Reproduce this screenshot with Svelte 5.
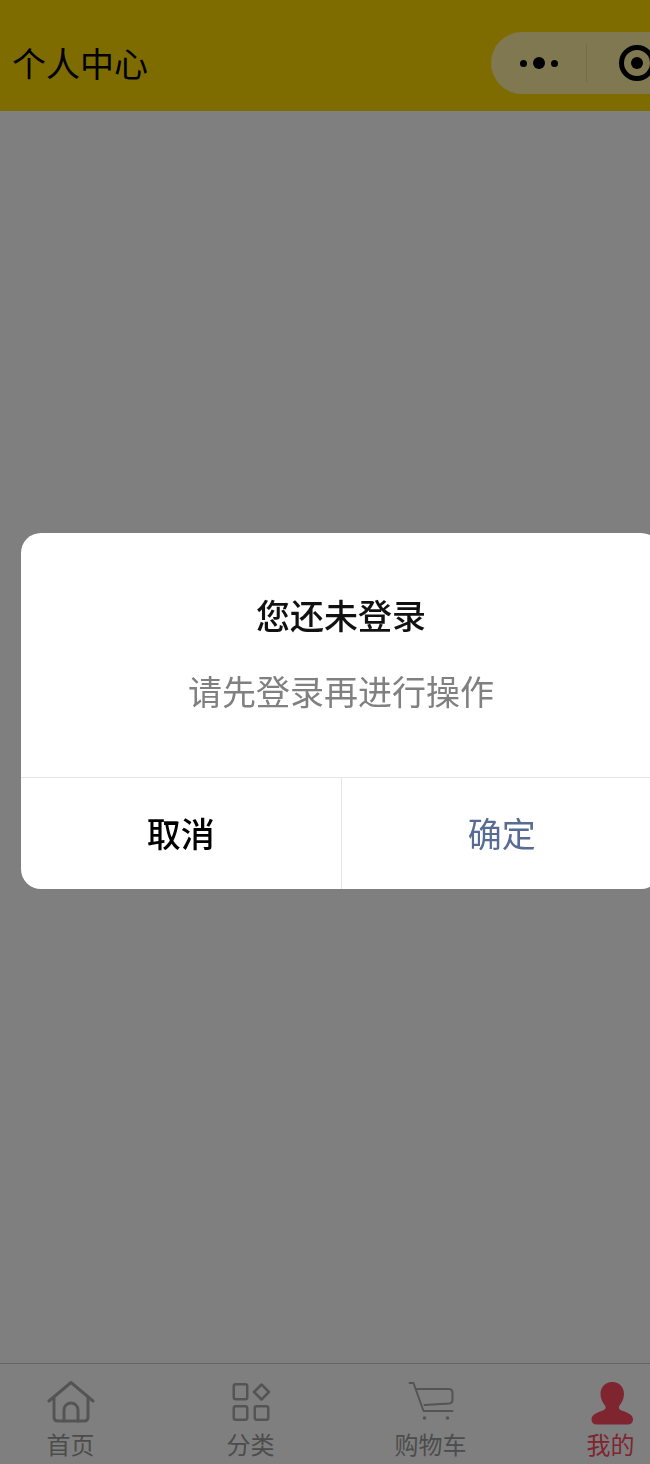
<script lang="ts">
  const tabs = [
    { key: "home", label: "首页" },
    { key: "category", label: "分类" },
    { key: "cart", label: "购物车" },
    { key: "mine", label: "我的" },
  ];
  const active = "mine";
</script>

<div class="page">
  <header class="navbar">
    <span class="nav-title">个人中心</span>
    <div class="capsule">
      <div class="capsule-more">
        <i class="dot"></i>
        <i class="dot big"></i>
        <i class="dot"></i>
      </div>
      <span class="capsule-line"></span>
      <div class="capsule-close"><i></i></div>
    </div>
  </header>

  <main class="content"></main>

  <nav class="tabbar">
    {#each tabs as tab}
      <div class="tab" class:active={tab.key === active}>
        <svg class="tab-icon" width="48" height="46" viewBox="0 0 48 46" fill="none" stroke="#a9a9a9" stroke-width="3" stroke-linecap="round" stroke-linejoin="round">
          {#if tab.key === "home"}
            <path d="M2 20 24 1.500 46 20" />
            <path d="M7 17v19q0 4 4 4h26q4 0 4-4V17" />
            <path d="M17 40V29a7 7 0 0 1 14 0v11" />
          {:else if tab.key === "category"}
            <rect x="6.750" y="3.250" width="13.500" height="15" rx="2" stroke-width="2.500" />
            <rect x="6.750" y="25.250" width="13.500" height="13.500" rx="2" stroke-width="2.500" />
            <rect x="27.750" y="25.250" width="13.500" height="13.500" rx="2" stroke-width="2.500" />
            <path d="M34.500 3.500 42 11 34.500 18.500 27 11Z" stroke-width="2.500" />
          {:else if tab.key === "cart"}
            <path d="M2.500 2h4l10 28h29" stroke-width="2" />
            <path d="M9.500 8h32q4 0 4 4v7q0 3-3 3.500L17.500 24" stroke-width="2" />
            <circle cx="17.500" cy="37" r="1.800" fill="#a9a9a9" stroke="none" />
            <circle cx="40.500" cy="37" r="1.800" fill="#a9a9a9" stroke="none" />
          {:else}
            <path d="M24.800 1c-6.500 0-11.300 5-11.300 12 0 5 2.300 9 4.800 12 1 2.200-.3 3.800-2.300 4.500C10 31.500 4.500 33.500 4.500 38.500c0 3 1.800 4.900 4.500 4.900h32.500c2.700 0 4.500-1.900 4.500-4.900 0-5-5.500-7-11.500-9-2-.7-3.300-2.300-2.300-4.500 2.500-3 4.800-7 4.800-12 0-7-4.700-12-11.200-12Z" fill="#ff4a5f" stroke="none" />
          {/if}
        </svg>
        <span class="tab-label">{tab.label}</span>
      </div>
    {/each}
  </nav>

  <div class="mask"></div>

  <div class="modal">
    <div class="modal-body">
      <div class="modal-title">您还未登录</div>
      <div class="modal-text">请先登录再进行操作</div>
    </div>
    <div class="modal-actions">
      <div class="btn cancel">取消</div>
      <div class="btn confirm">确定</div>
    </div>
  </div>
</div>

<style>
  :global(body) {
    margin: 0;
    overflow: hidden;
  }

  .page {
    position: relative;
    width: 650px;
    height: 1464px;
    overflow: hidden;
    display: flex;
    flex-direction: column;
    background: #fff;
    font-family: "Noto Sans CJK SC", "Noto Sans", sans-serif;
  }

  .navbar {
    height: 111px;
    flex-shrink: 0;
    background: #ffd800;
    display: flex;
    align-items: flex-end;
    justify-content: space-between;
    padding: 0 0 17px 12px;
    box-sizing: border-box;
  }

  .nav-title {
    font-size: 34px;
    line-height: 62px;
    height: 62px;
    color: #000;
  }

  .capsule {
    width: 200px;
    height: 62px;
    flex-shrink: 0;
    margin-right: -41px;
    border-radius: 31px 0 0 31px;
    background: rgba(255, 255, 255, 0.63);
    display: flex;
    align-items: center;
  }

  .capsule-more {
    width: 95px;
    display: flex;
    align-items: center;
    justify-content: center;
    gap: 6px;
  }

  .dot {
    width: 7px;
    height: 7px;
    border-radius: 50%;
    background: #000;
  }

  .dot.big {
    width: 12px;
    height: 12px;
  }

  .capsule-line {
    width: 1px;
    height: 38px;
    background: rgba(0, 0, 0, 0.1);
  }

  .capsule-close {
    margin-left: 32px;
    width: 36px;
    height: 36px;
    flex-shrink: 0;
    box-sizing: border-box;
    border: 5px solid #000;
    border-radius: 50%;
    display: flex;
    align-items: center;
    justify-content: center;
  }

  .capsule-close i {
    width: 12px;
    height: 12px;
    border-radius: 50%;
    background: #000;
  }

  .content {
    flex: 1;
  }

  .tabbar {
    flex-shrink: 0;
    height: 100px;
    width: 720px;
    margin-left: -19.5px;
    display: grid;
    grid-template-columns: repeat(4, 180px);
    border-top: 1px solid #ccc;
    background: #fff;
  }

  .tab {
    display: flex;
    flex-direction: column;
    align-items: center;
    padding-top: 17px;
    color: #999;
  }

  .tab-icon {
    display: block;
    flex-shrink: 0;
  }

  .tab-label {
    font-size: 24px;
    line-height: 34px;
  }

  .tab.active .tab-label {
    color: #ff4a5f;
  }

  .mask {
    position: absolute;
    inset: 0;
    background: rgba(0, 0, 0, 0.5);
  }

  .modal {
    position: absolute;
    left: 21px;
    top: 533px;
    width: 640px;
    height: 356px;
    display: flex;
    flex-direction: column;
    border-radius: 20px;
    overflow: hidden;
    background: #fff;
    text-align: center;
  }

  .modal-body {
    flex: 1;
    display: flex;
    flex-direction: column;
    padding-top: 57px;
    box-sizing: border-box;
  }

  .modal-title {
    font-size: 34px;
    line-height: 50px;
    font-weight: 500;
    color: #111;
  }

  .modal-text {
    font-size: 34px;
    line-height: 50px;
    margin-top: 26px;
    color: #808080;
  }

  .modal-title,
  .modal-text,
  .btn {
    will-change: transform;
  }

  .modal-actions {
    height: 112px;
    display: flex;
    box-sizing: border-box;
    border-top: 1px solid #e5e5e5;
  }

  .btn {
    flex: 1;
    font-size: 34px;
    line-height: 109px;
    font-weight: 500;
  }

  .cancel {
    color: #000;
    border-right: 1px solid #e5e5e5;
  }

  .confirm {
    color: #576b95;
    font-weight: 400;
  }
</style>
